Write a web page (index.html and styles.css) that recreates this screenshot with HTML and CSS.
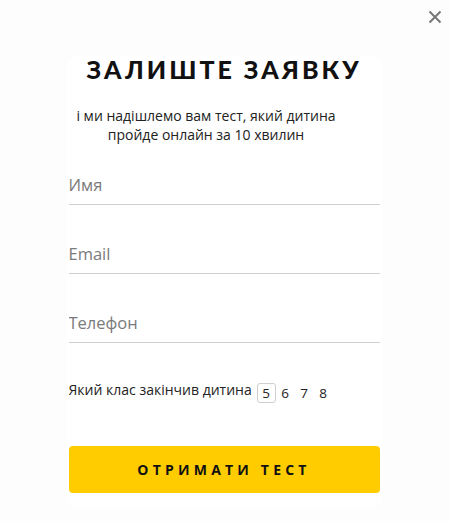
FILE: index.html
```html
<!DOCTYPE html>
<html lang="uk">

<head>
    <meta charset="UTF-8">
    <meta name="viewport" content="width=device-width, initial-scale=1.0">
    <title>Залиште заявку</title>
    <link rel="stylesheet" href="styles.css">
</head>

<body>

    <button class="close" aria-label="Закрити">
        <svg width="14" height="14" viewBox="0 0 14 14">
            <path d="M1.5 1.5 L12.5 12.5 M12.5 1.5 L1.5 12.5" stroke="#777" stroke-width="2" />
        </svg>
    </button>

    <div class="popup">
        <h2 class="popup-title">Залиште заявку</h2>
        <p class="popup-text">і ми надішлемо вам тест, який дитина<br>пройде онлайн за 10 хвилин</p>

        <form class="popup-form">
            <input class="field" type="text" placeholder="Имя">
            <input class="field" type="email" placeholder="Email">
            <input class="field" type="tel" placeholder="Телефон">

            <div class="grade">
                <span class="grade-label">Який клас закінчив дитина</span>
                <span class="grade-item active">5</span>
                <span class="grade-item">6</span>
                <span class="grade-item">7</span>
                <span class="grade-item">8</span>
            </div>

            <button class="submit" type="button">Отримати тест</button>
        </form>
    </div>

</body>

</html>
```

FILE: styles.css
```css
body {
    margin: 0;
    padding-top: 56px;
    background-color: #fdfdfd;
    font-family: 'Open Sans', sans-serif;
    color: #222;
    height: 465px;
}

.close {
    position: absolute;
    top: 10px;
    right: 8px;
    width: 14px;
    height: 14px;
    padding: 0;
    border: none;
    background: none;
    cursor: pointer;
}

.popup {
    width: 315px;
    margin: 0 auto;
    padding: 0 0 16px;
    position: relative;
    left: -1px;
    background-color: #fff;
    border-radius: 12px;
}

.popup-title {
    margin: 0 -4px;
    position: relative;
    top: -2px;
    text-align: center;
    font-family: 'Lato', sans-serif;
    font-weight: 900;
    font-size: 25px;
    letter-spacing: 3px;
    text-transform: uppercase;
    color: #111;
    line-height: 30px;
}

.popup-text {
    margin: 20px 0 0;
    padding-right: 36px;
    text-align: center;
    font-size: 14px;
    line-height: 19px;
    color: #222;
}

.popup-form {
    display: flex;
    flex-direction: column;
    padding: 0 2px;
}

.field {
    margin-top: 34px;
    padding: 0 0 5px;
    border: none;
    border-bottom: 1px solid #cfcfcf;
    font-family: 'Open Sans', sans-serif;
    font-size: 16.5px;
    line-height: 29px;
    color: #333;
    background: none;
    outline: none;
}

.field:first-child {
    margin-top: 26px;
}

.field::placeholder {
    color: #7a7a7a;
}

.grade {
    display: flex;
    align-items: flex-start;
    margin-top: 37px;
    font-size: 14px;
}

.grade-label {
    line-height: 19px;
    margin-right: 5px;
}

.grade-item {
    width: 17px;
    height: 18px;
    margin-top: 3px;
    line-height: 18px;
    text-align: center;
    font-size: 13.5px;
    border: 1px solid transparent;
    border-radius: 3px;
}

.grade-item.active {
    border-color: #cfcfcf;
}

.submit {
    margin-top: 43px;
    height: 47px;
    border: none;
    border-radius: 4px;
    background-color: #ffcc00;
    font-family: 'Open Sans', sans-serif;
    font-weight: 700;
    font-size: 14px;
    letter-spacing: 4.2px;
    text-transform: uppercase;
    color: #111;
    cursor: pointer;
}
```
